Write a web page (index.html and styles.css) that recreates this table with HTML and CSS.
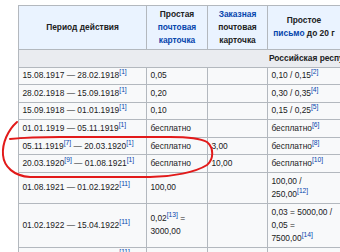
FILE: index.html
```html
<!DOCTYPE html>
<html lang="ru">
<head>
<meta charset="utf-8">
<title>Почтовые тарифы</title>
<link rel="stylesheet" href="styles.css">
</head>
<body>
<div class="page">
<table class="rates">
<colgroup>
<col class="c-period"><col class="c-card"><col class="c-reg"><col class="c-letter"><col class="c-regletter"><col class="c-note">
</colgroup>
<thead>
<tr>
<th>Период действия</th>
<th>Простая <a class="link">почтовая карточка</a></th>
<th><a class="link">Заказная</a> почтовая карточка</th>
<th>Простое <a class="link">письмо</a> до 20&nbsp;г</th>
<th>Заказное <a class="link">письмо</a> до 20&nbsp;г</th>
<th>Примечания</th>
</tr>
</thead>
<tbody>
<tr class="section"><th colspan="6">Российская республика</th></tr>
<tr><td>15.08.1917 — 28.02.1918<sup class="ref">[1]</sup></td><td>0,05</td><td></td><td>0,10 / 0,15<sup class="ref">[2]</sup></td><td>0,35 / 0,40<sup class="ref">[3]</sup></td><td></td></tr>
<tr><td>28.02.1918 — 15.09.1918<sup class="ref">[1]</sup></td><td>0,20</td><td></td><td>0,30 / 0,35<sup class="ref">[4]</sup></td><td>0,80 / 0,85</td><td></td></tr>
<tr><td>15.09.1918 — 01.01.1919<sup class="ref">[1]</sup></td><td>0,10</td><td></td><td>0,15 / 0,25<sup class="ref">[5]</sup></td><td>0,50 / 0,60</td><td></td></tr>
<tr><td>01.01.1919 — 05.11.1919<sup class="ref">[1]</sup></td><td>бесплатно</td><td></td><td>бесплатно<sup class="ref">[6]</sup></td><td>0,50</td><td></td></tr>
<tr><td>05.11.1919<sup class="ref">[7]</sup> — 20.03.1920<sup class="ref">[1]</sup></td><td>бесплатно</td><td>3,00</td><td>бесплатно<sup class="ref">[8]</sup></td><td>3,00</td><td></td></tr>
<tr><td>20.03.1920<sup class="ref">[9]</sup> — 01.08.1921<sup class="ref">[1]</sup></td><td>бесплатно</td><td>10,00</td><td>бесплатно<sup class="ref">[10]</sup></td><td>10,00</td><td></td></tr>
<tr><td>01.08.1921 — 01.02.1922<sup class="ref">[11]</sup></td><td>100,00</td><td></td><td>100,00 / 250,00<sup class="ref">[12]</sup></td><td>500,00</td><td></td></tr>
<tr><td>01.02.1922 — 15.04.1922<sup class="ref">[11]</sup></td><td>0,02<sup class="ref">[13]</sup> = 3000,00</td><td></td><td>0,03 = 5000,00 / 0,05 = 7500,00<sup class="ref">[14]</sup></td><td>0,10</td><td></td></tr>
<tr><td>15.04.1922 — 01.07.1922<sup class="ref">[11]</sup></td><td>0,05</td><td></td><td>0,10</td><td>0,25</td><td></td></tr>
</tbody>
</table>
</div>
<svg class="mark" width="340" height="252" viewBox="0 0 340 252" aria-hidden="true">
<path d="M17,122 C8,130 2,143 3,155 C4,167 14,176 30,177 L150,177 C172,177 196,172 207,165 C214,159 214,148 207,142 C200,138 186,137 170,137 L60,137 C36,137 20,138 10,139" fill="none" stroke="#e21a1a" stroke-width="2" stroke-linecap="round" stroke-linejoin="round"/>
</svg>
</body>
</html>
```
FILE: styles.css
```css
html, body {
  margin: 0;
  padding: 0;
  overflow: hidden;
  background: #ffffff;
}
body {
  position: relative;
  width: 340px;
  height: 252px;
  font-family: "Liberation Sans", Arial, sans-serif;
  color: #202122;
}
.page {
  padding: 5px 0 0 18px;
}
.rates {
  border-collapse: collapse;
  table-layout: fixed;
  width: 600px;
  font-size: 8.4px;
  line-height: 13.2px;
  background: #f8f9fa;
  color: #202122;
}
.c-period { width: 128px; }
.c-card { width: 61px; }
.c-reg { width: 60px; }
.c-letter { width: 73px; }
.c-regletter { width: 140px; }
.c-note { width: 138px; }
.rates th,
.rates td {
  border: 1px solid #b3b8be;
  padding: 1.7px 3.4px;
  vertical-align: middle;
  text-align: left;
}
.rates thead th {
  background: #eaf3ff;
  font-weight: bold;
  text-align: center;
}
.rates .section th {
  background: #eaecf0;
  font-weight: bold;
  text-align: center;
}
.link {
  color: #0645ad;
  text-decoration: none;
}
.ref {
  color: #0645ad;
  font-size: 80%;
  line-height: 1;
  vertical-align: super;
}
.mark {
  position: absolute;
  left: 0;
  top: 0;
  pointer-events: none;
}
```
